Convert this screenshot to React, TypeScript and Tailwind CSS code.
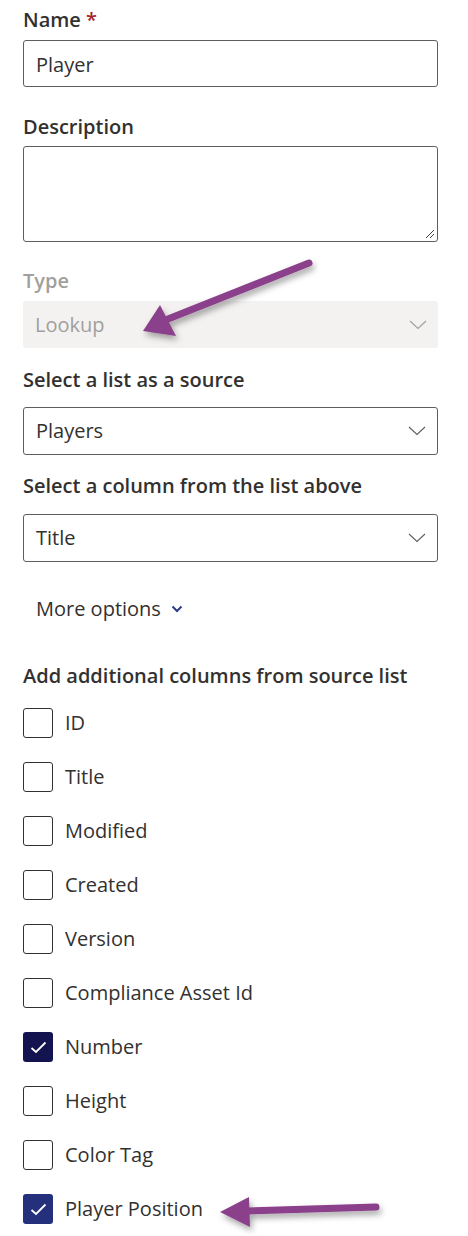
import { ReactNode } from "react";

const font = { fontFamily: '"Open Sans", "Noto Sans", sans-serif' };

const Chevron = ({ color = "#605e5c" }: { color?: string }) => (
  <svg width="18" height="10" viewBox="0 0 18 10" fill="none">
    <path d="M1 1 L9 8.5 L17 1" stroke={color} strokeWidth="1.1" />
  </svg>
);

const Label = ({ children, className = "" }: { children: ReactNode; className?: string }) => (
  <div className={`text-[20px] leading-[28px] font-semibold text-[#323130] ${className}`}>{children}</div>
);

const Dropdown = ({ value, className = "" }: { value: string; className?: string }) => (
  <div
    className={`h-[48px] rounded-[3px] border border-[#605e5c] bg-white flex items-center justify-between pl-[12px] pr-[11px] ${className}`}
  >
    <span className="text-[20px] text-[#323130]">{value}</span>
    <Chevron />
  </div>
);

const Check = ({ label, checked, color }: { label: string; checked?: boolean; color?: string }) => (
  <div className="h-[54px] flex items-center gap-[12px]">
    {checked ? (
      <div
        className="w-[30px] h-[30px] rounded-[3px] flex items-center justify-center"
        style={{ backgroundColor: color }}
      >
        <svg width="17" height="13" viewBox="0 0 17 13" fill="none">
          <path d="M1.5 7 L6 11 L15.5 1.5" stroke="white" strokeWidth="1.8" />
        </svg>
      </div>
    ) : (
      <div className="w-[30px] h-[30px] rounded-[3px] border border-[#323130] bg-white" />
    )}
    <span className="text-[20px] text-[#323130]">{label}</span>
  </div>
);

const columns = [
  { label: "ID" },
  { label: "Title" },
  { label: "Modified" },
  { label: "Created" },
  { label: "Version" },
  { label: "Compliance Asset Id" },
  { label: "Number", checked: true, color: "#13144f" },
  { label: "Height" },
  { label: "Color Tag" },
  { label: "Player Position", checked: true, color: "#24307c" },
];

const App = () => {
  return (
    <div className="relative w-[468px] h-[1236px] bg-white overflow-hidden" style={font}>
      <div className="pl-[23px] pr-[30px] pt-[6px]">
        {/* Name */}
        <Label>
          Name <span className="text-[#a4262c]">*</span>
        </Label>
        <div className="mt-[6px] h-[47px] rounded-[3px] border border-[#605e5c] flex items-center pl-[12px] pt-[3px]">
          <span className="text-[20px] text-[#323130]">Player</span>
        </div>

        {/* Description */}
        <Label className="mt-[26px]">Description</Label>
        <div className="relative mt-[5px] h-[96px] rounded-[3px] border border-[#605e5c]">
          <svg className="absolute right-[2px] bottom-[2px]" width="10" height="10" viewBox="0 0 10 10">
            <path d="M9 1 L1 9 M9 5 L5 9" stroke="#444" strokeWidth="1" />
          </svg>
        </div>

        {/* Type */}
        <div className="mt-[25px] text-[20px] leading-[28px] font-semibold text-[#a19f9d]">Type</div>
        <div className="mt-[6px] h-[47px] rounded-[3px] bg-[#f3f2f1] flex items-center justify-between pl-[12px] pr-[11px]">
          <span className="text-[20px] text-[#a19f9d]">Lookup</span>
          <Chevron color="#a19f9d" />
        </div>

        {/* Source list */}
        <Label className="mt-[18px]">Select a list as a source</Label>
        <Dropdown value="Players" className="mt-[13px]" />

        <Label className="mt-[17px]">Select a column from the list above</Label>
        <Dropdown value="Title" className="mt-[14px]" />

        {/* More options */}
        <div className="mt-[33px] pl-[13px] flex items-center gap-[10px] h-[28px]">
          <span className="text-[20px] text-[#323130]">More options</span>
          <svg width="12" height="8" viewBox="0 0 12 8" fill="none">
            <path d="M1.5 1.5 L6 6 L10.5 1.5" stroke="#2b3a8c" strokeWidth="2" />
          </svg>
        </div>

        <Label className="mt-[39px]">Add additional columns from source list</Label>

        <div className="mt-[6px]">
          {columns.map((c) => (
            <Check key={c.label} label={c.label} checked={c.checked} color={c.color} />
          ))}
        </div>
      </div>

      {/* Arrows */}
      <svg className="absolute left-0 top-0 pointer-events-none" width="468" height="1236">
        <defs>
          <filter id="sh" x="-20%" y="-50%" width="140%" height="200%">
            <feDropShadow dx="2" dy="4" stdDeviation="3" floodColor="#000" floodOpacity="0.35" />
          </filter>
        </defs>
        <g filter="url(#sh)">
          <line x1="309" y1="263" x2="168" y2="319" stroke="#8a3f8a" strokeWidth="7" strokeLinecap="round" />
          <polygon points="143,331 160,305 176,336" fill="#8a3f8a" />
          <line x1="376" y1="1207" x2="246" y2="1211" stroke="#8a3f8a" strokeWidth="7" strokeLinecap="round" />
          <polygon points="220,1212 249,1197 250,1227" fill="#8a3f8a" />
        </g>
      </svg>
    </div>
  );
};

export default App;
